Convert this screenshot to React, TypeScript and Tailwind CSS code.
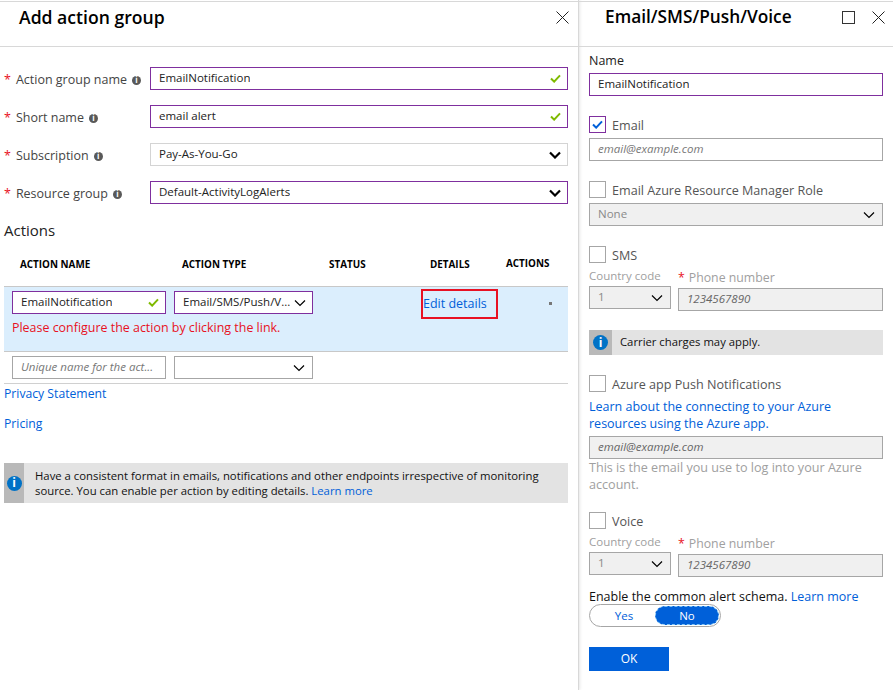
import type { ReactNode } from 'react';

const font = "font-['Open_Sans','Noto_Sans',sans-serif]";

function Check({ className = 'text-[#7fba00]' }: { className?: string }) {
  return (
    <svg viewBox="0 0 12 10" className={`h-[9px] w-[11px] shrink-0 ${className}`} fill="none" stroke="currentColor" strokeWidth="2.2">
      <path d="M1 5l3.5 3.5L11 1.5" />
    </svg>
  );
}

function Chevron({ bold = false }: { bold?: boolean }) {
  return (
    <svg viewBox="0 0 12 8" className="h-[8px] w-[12px] shrink-0 text-black" fill="none" stroke="currentColor" strokeWidth={bold ? 2.2 : 1.2}>
      <path d="M1 1.5l5 5 5-5" />
    </svg>
  );
}

function CloseIcon() {
  return (
    <svg viewBox="0 0 13 13" className="h-[13px] w-[13px] text-[#222]" fill="none" stroke="currentColor" strokeWidth="1">
      <path d="M0.5 0.5l12 12M12.5 0.5l-12 12" />
    </svg>
  );
}

function InfoDot() {
  return (
    <span className="flex h-[9px] w-[9px] shrink-0 items-center justify-center rounded-full bg-[#595959] text-[8px] font-bold leading-none text-white">i</span>
  );
}

function BlueInfo() {
  return (
    <span className="flex h-[15px] w-[15px] shrink-0 items-center justify-center rounded-full bg-[#0072c6] text-[12px] font-bold leading-none text-white">i</span>
  );
}

function FormRow({ label, children }: { label: string; children: ReactNode }) {
  return (
    <div className="flex h-[23px] items-center">
      <div className="flex w-[150px] items-center pl-[4px] pt-[3px] text-[12.5px] text-[#444]">
        <span className="mr-[5px] text-[#e81123]">*</span>
        <span className="mr-[5px]">{label}</span>
        <InfoDot />
      </div>
      {children}
    </div>
  );
}

function Field({ value, border = 'border-[#7f2f9e]', right, className = 'w-[418px]' }: { value: string; border?: string; right?: ReactNode; className?: string }) {
  return (
    <div className={`flex h-[23px] items-center justify-between border bg-white pl-[8px] pr-[6px] text-[11.5px] text-[#222] ${border} ${className}`}>
      <span className="truncate pb-[1px]">{value}</span>
      {right}
    </div>
  );
}

function CheckRow({ label, checked = false }: { label: string; checked?: boolean }) {
  return (
    <div className="flex h-[17px] items-center gap-[6px] text-[12.6px] text-[#555]">
      <span className={`flex h-[17px] w-[17px] shrink-0 items-center justify-center border ${checked ? 'border-[#7f2f9e]' : 'border-[#a6a6a6]'}`}>
        {checked && <Check className="text-[#0060d9]" />}
      </span>
      <span className="pt-[3px]">{label}</span>
    </div>
  );
}

function Disabled({ value, italic = false, chevron = false, className = '' }: { value: string; italic?: boolean; chevron?: boolean; className?: string }) {
  return (
    <div className={`flex h-[23px] items-center justify-between border border-[#a6a6a6] bg-[#f0f0f0] pl-[8px] pr-[7px] text-[11.5px] ${italic ? 'italic text-[#666]' : 'text-[#8a8a8a]'} ${className}`}>
      <span className="pb-[1px]">{value}</span>
      {chevron && <Chevron />}
    </div>
  );
}

function PhoneRow() {
  return (
    <div className="flex gap-[7px]">
      <div className="w-[82px]">
        <div className="mb-[1px] h-[17px] text-[11.5px] leading-[15px] text-[#a0a0a0]">Country code</div>
        <Disabled value="1" chevron />
      </div>
      <div className="flex-1">
        <div className="mb-[2px] mt-[1px] h-[17px] text-[12.3px] leading-[17px] text-[#a0a0a0]">
          <span className="mr-[4px] text-[#e81123]">*</span>Phone number
        </div>
        <Disabled value="1234567890" italic />
      </div>
    </div>
  );
}

export default function App() {
  return (
    <div className={`flex h-[690px] w-[893px] overflow-hidden bg-white ${font}`}>
      <div className="w-[578px] shrink-0 shadow-[2px_0_3px_rgba(0,0,0,0.1)]">
        <div className="mt-px flex h-[46px] justify-between border-y border-[#d8d8d8] pl-[19px] pr-[9px] pt-[2px]">
          <h1 className="text-[17.6px] font-semibold leading-[26px] text-black">Add action group</h1>
          <div className="pt-[7px]"><CloseIcon /></div>
        </div>

        <div className="mt-[20px] flex flex-col gap-[15px] pr-[10px]">
          <FormRow label="Action group name"><Field value="EmailNotification" right={<Check />} /></FormRow>
          <FormRow label="Short name"><Field value="email alert" right={<Check />} /></FormRow>
          <FormRow label="Subscription"><Field value="Pay-As-You-Go" border="border-[#d4d4d4]" right={<Chevron bold />} /></FormRow>
          <FormRow label="Resource group"><Field value="Default-ActivityLogAlerts" right={<Chevron bold />} /></FormRow>
        </div>

        <h2 className="mt-[15px] pl-[4px] text-[15px] leading-[22px] text-[#222]">Actions</h2>

        <div className="ml-[4px] mr-[10px] mt-[13px]">
          <div className="flex h-[21px] items-center text-[9.9px] font-bold text-black">
            <span className="w-[178px] pl-[16px]">ACTION NAME</span>
            <span className="w-[147px]">ACTION TYPE</span>
            <span className="w-[101px]">STATUS</span>
            <span className="w-[76px]">DETAILS</span>
            <span className="-mt-[3px]">ACTIONS</span>
          </div>
          <div className="mt-[11px] h-[66px] border-y border-[#c8c8c8] bg-[#dbeefd] pl-[8px] pt-[4px]">
            <div className="flex gap-[8px]">
              <Field value="EmailNotification" className="w-[154px]" right={<Check />} />
              <Field value="Email/SMS/Push/V..." className="w-[139px]" right={<Chevron />} />
              <div className="-mt-[2px] ml-[100px] flex h-[30px] w-[77px] items-center border-2 border-[#e81123] text-[12.5px] text-[#0060d9]">Edit details</div>
              <span className="ml-[43px] mt-[11px] h-[3px] w-[3px] bg-[#777]" />
            </div>
            <p className="-mt-[1px] text-[12.45px] leading-[20px] text-[#e81123]">Please configure the action by clicking the link.</p>
          </div>
          <div className="flex h-[32px] gap-[8px] border-b border-[#d0d0d0] pl-[8px] pt-[4px]">
            <div className="flex h-[23px] w-[154px] items-center border border-[#a6a6a6] pl-[8px] text-[11.5px] italic text-[#777]"><span className="pb-[1px]">Unique name for the act...</span></div>
            <div className="flex h-[23px] w-[139px] items-center justify-end border border-[#a6a6a6] pr-[7px]"><Chevron /></div>
          </div>
        </div>

        <div className="mt-[1px] pl-[4px] text-[12.2px] leading-[18px] text-[#0060d9]">
          <div>Privacy Statement</div>
          <div className="mt-[12px]">Pricing</div>
        </div>

        <div className="ml-[4px] mr-[10px] mt-[30px] flex h-[40px] bg-[#e3e3e3]">
          <div className="flex w-[20px] shrink-0 items-center justify-center bg-[#b9b9b9]"><BlueInfo /></div>
          <p className="pl-[11px] pt-[5px] text-[11.34px] leading-[15px] text-[#111]">
            Have a consistent format in emails, notifications and other endpoints irrespective of monitoring source. You can enable per action by editing details. <span className="text-[#0060d9]">Learn more</span>
          </p>
        </div>
      </div>

      <div className="flex-1 border-l border-[#d8d8d8]">
        <div className="mt-px flex h-[46px] items-start justify-between border-y border-[#d8d8d8] pl-[26px] pr-[8px] pt-[2px]">
          <h2 className="text-[17.3px] font-semibold leading-[26px] text-black">Email/SMS/Push/Voice</h2>
          <div className="flex gap-[17px] pt-[7px]">
            <span className="h-[13px] w-[13px] border border-[#333]" />
            <CloseIcon />
          </div>
        </div>

        <div className="flex flex-col px-[10px]">
          <div className="mt-[6px] h-[20px] text-[12.5px] leading-[16px] text-[#222]">Name</div>
          <Field value="EmailNotification" className="w-full" />
          <div className="mt-[20px]"><CheckRow label="Email" checked /></div>
          <div className="mt-[5px] flex h-[23px] items-center border border-[#a6a6a6] pl-[8px] text-[11.5px] italic text-[#777]"><span className="pb-[1px]">email@example.com</span></div>
          <div className="mt-[20px]"><CheckRow label="Email Azure Resource Manager Role" /></div>
          <Disabled value="None" chevron className="mt-[5px]" />
          <div className="mt-[20px]"><CheckRow label="SMS" /></div>
          <div className="mt-[5px]"><PhoneRow /></div>
          <div className="mt-[19px] flex h-[25px] items-center bg-[#e3e3e3]">
            <div className="flex h-full w-[23px] shrink-0 items-center justify-center bg-[#b9b9b9]"><BlueInfo /></div>
            <span className="pl-[8px] text-[11.3px] text-[#111]">Carrier charges may apply.</span>
          </div>
          <div className="mt-[20px]"><CheckRow label="Azure app Push Notifications" /></div>
          <p className="mt-[6px] text-[12.5px] leading-[17px] text-[#0060d9]">Learn about the connecting to your Azure resources using the Azure app.</p>
          <Disabled value="email@example.com" italic className="mt-[4px]" />
          <p className="text-[12.6px] leading-[17px] text-[#a0a0a0]">This is the email you use to log into your Azure account.</p>
          <div className="mt-[19px]"><CheckRow label="Voice" /></div>
          <div className="mt-[5px]"><PhoneRow /></div>
          <p className="mt-[12px] pt-[1px] text-[12.5px] leading-[14px] text-[#111]">Enable the common alert schema. <span className="text-[#0060d9]">Learn more</span></p>
          <div className="flex h-[23px] w-[132px] items-center rounded-full border border-[#a6a6a6] p-[1px] text-[11.5px]">
            <span className="flex-1 pl-[2px] text-center text-[#0060d9]">Yes</span>
            <span className="flex h-[19px] w-[64px] items-center justify-center rounded-full border border-dashed border-[#7fc4f5] bg-[#0060d9] text-white">No</span>
          </div>
          <button className="mt-[20px] h-[24px] w-[80px] bg-[#0060d9] text-[12px] text-white">OK</button>
        </div>
      </div>
    </div>
  );
}
